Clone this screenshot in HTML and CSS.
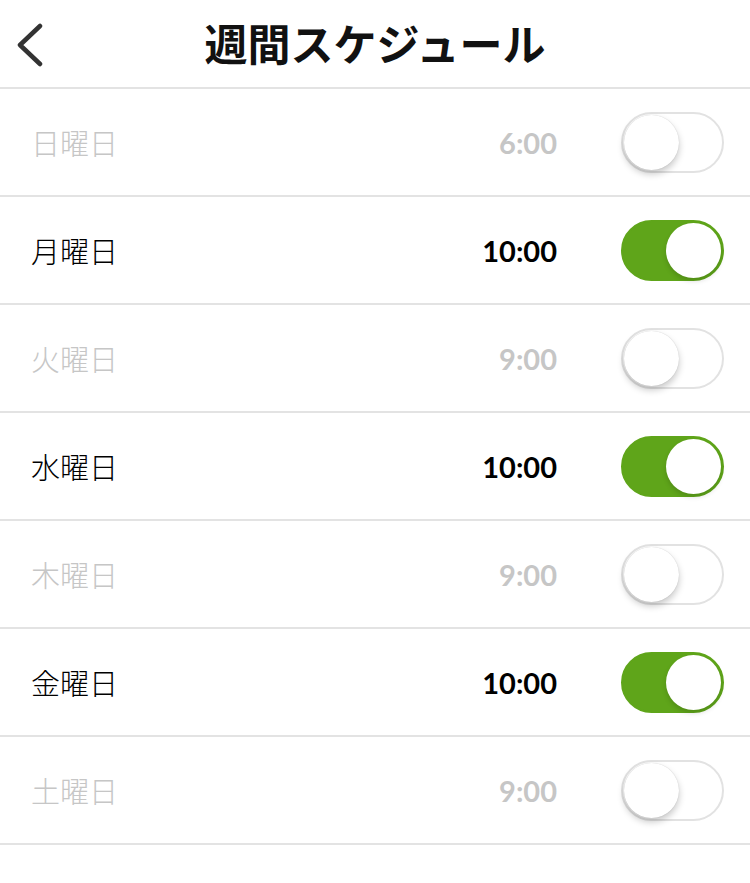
FILE: index.html
```html
<html>

<head>
    <meta charset="utf-8">
    <link rel="stylesheet" href="styles.css">
</head>

<body>
    <div class="header">
        <div class="back">
            <svg width="30" height="44" viewBox="0 0 30 44">
                <path d="M26 3 L6 22 L26 41" fill="none" stroke="#333" stroke-width="4.5" stroke-linecap="round" stroke-linejoin="round" />
            </svg>
        </div>
        <div class="title">週間スケジュール</div>
    </div>

    <div class="list">
        <div class="row off">
            <div class="day">日曜日</div>
            <div class="time">6:00</div>
            <div class="toggle"><div class="knob"></div></div>
        </div>
        <div class="row on">
            <div class="day">月曜日</div>
            <div class="time">10:00</div>
            <div class="toggle"><div class="knob"></div></div>
        </div>
        <div class="row off">
            <div class="day">火曜日</div>
            <div class="time">9:00</div>
            <div class="toggle"><div class="knob"></div></div>
        </div>
        <div class="row on">
            <div class="day">水曜日</div>
            <div class="time">10:00</div>
            <div class="toggle"><div class="knob"></div></div>
        </div>
        <div class="row off">
            <div class="day">木曜日</div>
            <div class="time">9:00</div>
            <div class="toggle"><div class="knob"></div></div>
        </div>
        <div class="row on">
            <div class="day">金曜日</div>
            <div class="time">10:00</div>
            <div class="toggle"><div class="knob"></div></div>
        </div>
        <div class="row off">
            <div class="day">土曜日</div>
            <div class="time">9:00</div>
            <div class="toggle"><div class="knob"></div></div>
        </div>
    </div>
</body>

</html>
```

FILE: styles.css
```css
body {
    margin: 0;
    background-color: #fff;
    font-family: "Noto Sans CJK JP", sans-serif;
}

.header {
    height: 87px;
    border-bottom: 2px solid #e3e3e3;
    display: flex;
    align-items: center;
    justify-content: center;
    position: relative;
}

.back {
    position: absolute;
    left: 14px;
    top: 23px;
}

.title {
    font-size: 43px;
    font-weight: 700;
    color: #111;
    margin-bottom: 4px;
}

.row {
    height: 106px;
    border-bottom: 2px solid #e3e3e3;
    display: flex;
    align-items: center;
    padding: 0 26px 0 31px;
}

.day {
    flex: 1;
    font-size: 29px;
    font-weight: 300;
}

.time {
    font-family: Lato, sans-serif;
    font-size: 29px;
    font-weight: 700;
    margin-right: 64px;
}

.toggle {
    width: 97px;
    height: 57px;
    border-radius: 31px;
    border: 2px solid #e2e2e2;
    background: #fff;
    display: flex;
    align-items: center;
    padding: 0 1px;
}

.knob {
    width: 55px;
    height: 55px;
    border-radius: 50%;
    background: #fff;
    box-shadow: 0 4px 7px rgba(0, 0, 0, 0.22), 0 0 1px rgba(0, 0, 0, 0.2);
}

.off .day,
.off .time {
    color: #c6c6c6;
}

.on .day,
.on .time {
    color: #000;
}

.on .toggle {
    background: #5fa51a;
    border-color: #5fa51a;
    justify-content: flex-end;
}

.on .knob {
    box-shadow: 0 3px 5px rgba(0, 0, 0, 0.15);
}
```
